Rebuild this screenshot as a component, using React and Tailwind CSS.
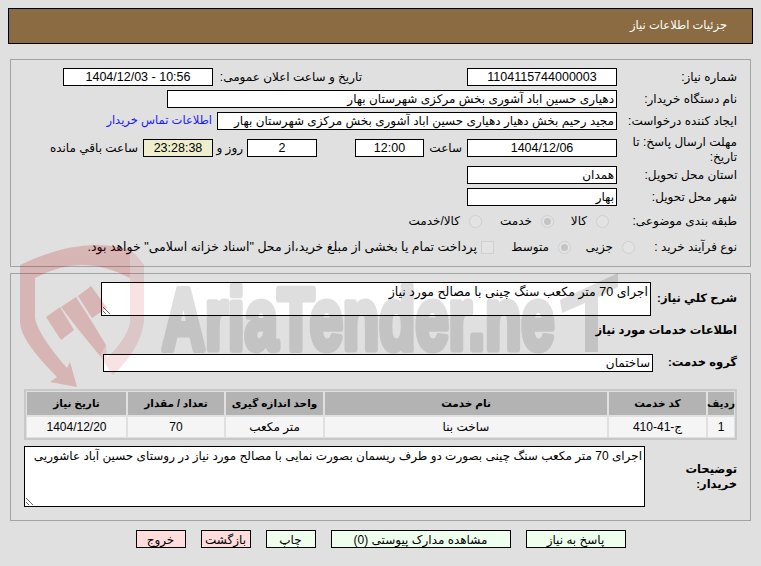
const font = { fontFamily: '"Liberation Sans", "DejaVu Sans", sans-serif' };

function Field({ value, className = "", center = false, ltr = false }) {
  return (
    <input
      readOnly
      value={value}
      dir={ltr ? "ltr" : "rtl"}
      className={`h-[18px] border border-black bg-white px-[2px] text-black outline-none shrink-0 ${center ? "text-center text-[12.5px]" : "text-right text-[12px]"} ${className}`}
    />
  );
}

function Radio({ checked = false }) {
  return (
    <span className="flex h-[13px] w-[13px] shrink-0 items-center justify-center rounded-full border border-[#cfcfcf] bg-[#e3e3e3]">
      {checked && <span className="h-[7px] w-[7px] rounded-full bg-[#c4c4c4]" />}
    </span>
  );
}

function Option({ label, checked, className = "" }) {
  return (
    <div className={`flex items-center shrink-0 ${className}`}>
      <span className="ml-[9px]"><Radio checked={checked} /></span>
      <span>{label}</span>
    </div>
  );
}

function Row({ label, labelWidth = "w-[120px]", className = "", children }) {
  return (
    <div className={`flex h-[18px] items-center ${className}`}>
      <div className={`shrink-0 leading-[15px] ${labelWidth}`}>{label}</div>
      {children}
    </div>
  );
}

function Watermark() {
  return (
    <svg className="pointer-events-none absolute left-0 top-0" width="761" height="566" viewBox="0 0 761 566">
      <g fill="#b20000" opacity="0.19">
        <path d="M20 265 Q82 235 130 250 L130 278 Q82 252 35 278 L35 318 Q38 335 67 368 L70 362 L77 387 L50 382 L57 377 Q20 340 20 322 Z" />
        <path d="M46 317 L60 307 L74 330 L61 340 Z" />
        <path d="M61 307 L76 297 L92 322 L106 345 L100 356 L78 329 Z" />
        <path d="M78 296 L91 286 L107 308 L92 318 Z" />
      </g>
      <g fill="#b20000" opacity="0.11">
        <path d="M130 250 Q138 256 144 265 L144 322 Q140 350 113 375 L100 356 L106 345 L107 358 Q130 335 130 320 Z" />
      </g>
      <g opacity="0.125">
        <text
          transform="matrix(0.684 0 0 1 162 348.5)"
          direction="ltr"
          fontSize="87"
          fontWeight="700"
          fontFamily="Liberation Sans"
          stroke="#000"
          strokeWidth="7"
          strokeLinejoin="round"
        >
          AriaTender.ne
        </text>
        <path d="M560 300 L618 273 L618 287 L598 297 L598 352 L585 352 L585 303 L562 313 Z" />
      </g>
    </svg>
  );
}

export default function App() {
  const rowHead = "flex items-center justify-center whitespace-nowrap bg-[#b3b3b3] text-[10.5px] font-bold";
  const cell = "flex items-center justify-center bg-[#f5f5f5]";

  return (
    <div dir="rtl" style={font} className="relative h-[566px] w-[761px] overflow-hidden bg-[#e0e0e0] text-[12px] text-black">
      <div className="px-[8px] pt-[8px]">
        <div className="flex h-[36px] items-center border border-black bg-[#8b6c42] pr-[25px] text-[11.5px] text-white">
          جزئیات اطلاعات نیاز
        </div>
      </div>

      <div className="mx-[10px] mt-[15px] h-[208px] border border-[#a3a3a3] pr-[13px] pt-[8px]">
        <Row label="شماره نیاز:">
          <Field value="1104115744000003" center className="w-[150px]" />
          <div className="mr-[105px] w-[149px] shrink-0">تاریخ و ساعت اعلان عمومی:</div>
          <Field value="1404/12/03 - 10:56" center ltr className="w-[150px]" />
        </Row>
        <Row label="نام دستگاه خریدار:" className="mt-[4px]">
          <Field value="دهیاری حسین اباد آشوری بخش مرکزی شهرستان بهار" className="w-[450px]" />
        </Row>
        <Row label="ایجاد کننده درخواست:" className="mt-[4px]">
          <Field value="مجید رحیم بخش دهیار دهیاری حسین اباد آشوری بخش مرکزی شهرستان بهار" className="w-[400px]" />
          <a className="mr-[5px] text-[11.5px] text-[#1a1aff]">اطلاعات تماس خریدار</a>
        </Row>
        <Row label={<div className="mt-[3px]">مهلت ارسال پاسخ: تا تاریخ:</div>} className="mt-[9px]">
          <Field value="1404/12/06" center className="w-[150px]" />
          <span className="mr-[5px] w-[33px] shrink-0">ساعت</span>
          <Field value="12:00" center className="mr-[5px] w-[69px]" />
          <Field value="2" center className="mr-[38px] w-[70px]" />
          <span className="mr-[4px] w-[30px] shrink-0">روز و</span>
          <Field value="23:28:38" center className="w-[70px] !bg-[#eeeecc]" />
          <span className="mr-[5px] shrink-0">ساعت باقي مانده</span>
        </Row>
        <Row label="استان محل تحویل:" className="mt-[9px]">
          <Field value="همدان" className="w-[150px]" />
        </Row>
        <Row label="شهر محل تحویل:" className="mt-[4px]">
          <Field value="بهار" className="w-[150px]" />
        </Row>
        <Row label="طبقه بندی موضوعی:" className="mt-[6px]">
          <Option label="کالا" className="mr-[8px] w-[55px]" />
          <Option label="خدمت" checked className="w-[72px]" />
          <Option label="کالا/خدمت" />
        </Row>
        <Row label="نوع فرآیند خرید :" labelWidth="w-[102px]" className="mt-[8px]">
          <Option label="جزیی" className="w-[64px]" />
          <Option label="متوسط" checked className="w-[72px]" />
          <span className="ml-[4px] mr-[5px] h-[13px] w-[13px] shrink-0 border border-[#cfcfcf] bg-[#e3e3e3]" />
          <span className="shrink-0 text-[12.5px]">پرداخت تمام یا بخشی از مبلغ خرید،از محل "اسناد خزانه اسلامی" خواهد بود.</span>
        </Row>
      </div>

      <div className="mx-[10px] mt-[6px] h-[248px] border border-[#a3a3a3] pr-[13px] pt-[8px] text-[12px]">
        <div className="flex">
          <div className="flex h-[34px] w-[86px] shrink-0 items-center text-[11.5px] font-bold">شرح کلي نیاز:</div>
          <textarea
            readOnly
            defaultValue="اجرای 70 متر مکعب سنگ چینی با مصالح مورد نیاز"
            className="h-[34px] w-[550px] border border-black bg-white px-[2px] text-[12.5px] outline-none"
          />
        </div>
        <div className="mt-[7px] text-[11.5px] font-bold leading-[15px]">اطلاعات خدمات مورد نیاز</div>
        <div className="mt-[16px] flex h-[18px] items-center">
          <div className="w-[84px] shrink-0 text-[11.5px] font-bold">گروه خدمت:</div>
          <Field value="ساختمان" className="w-[550px]" />
        </div>
        <div className="ml-[13px] mt-[17px] grid h-[51px] grid-cols-[26px_97px_282px_97px_96px_1fr] grid-rows-[23px_20px] gap-[2px] border-2 border-[#c8c8c8] p-[1px]">
          <div className={rowHead}>ردیف</div>
          <div className={rowHead}>کد خدمت</div>
          <div className={rowHead}>نام خدمت</div>
          <div className={rowHead}>واحد اندازه گیری</div>
          <div className={rowHead}>تعداد / مقدار</div>
          <div className={rowHead}>تاریخ نیاز</div>
          <div className={cell}>1</div>
          <div className={cell}>ج-41-410</div>
          <div className={cell}>ساخت بنا</div>
          <div className={cell}>متر مکعب</div>
          <div className={cell}>70</div>
          <div className={cell}>1404/12/20</div>
        </div>
        <div className="mt-[6px] flex">
          <div className="flex h-[61px] w-[92px] shrink-0 items-center text-[11.5px] font-bold leading-[15px]">
            توضیحات خریدار:
          </div>
          <textarea
            readOnly
            defaultValue="اجرای 70 متر مکعب سنگ چینی بصورت دو طرف ریسمان بصورت نمایی با مصالح مورد نیاز در روستای حسین آباد عاشوریی"
            className="h-[61px] w-[621px] border border-black bg-white px-[2px] text-[12px] outline-none"
          />
        </div>
      </div>

      <div className="mt-[9px] flex justify-center gap-[15px]">
        <button className="h-[18px] w-[100px] border border-black bg-[#eeffee]">پاسخ به نیاز</button>
        <button className="h-[18px] w-[180px] border border-black bg-[#eeffee]">مشاهده مدارک پیوستی (0)</button>
        <button className="h-[18px] w-[50px] border border-black bg-[#eeffee]">چاپ</button>
        <button className="h-[18px] w-[50px] border border-black bg-[#ffdddd]">بازگشت</button>
        <button className="h-[18px] w-[50px] border border-black bg-[#ffdddd]">خروج</button>
      </div>

      <Watermark />
    </div>
  );
}
